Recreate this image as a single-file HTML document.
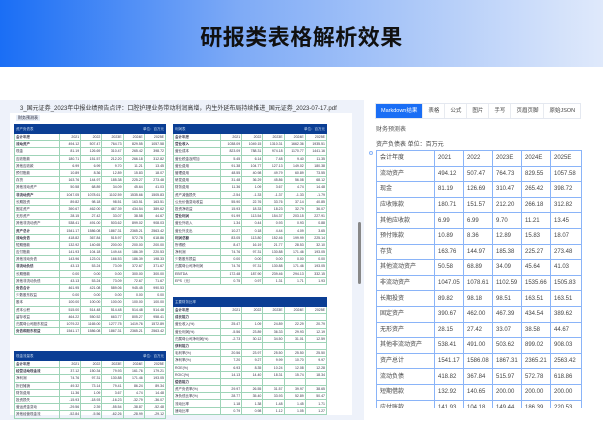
<!DOCTYPE html>
<html><head><meta charset="utf-8"><style>
*{margin:0;padding:0;box-sizing:border-box}
body{width:603px;height:437px;overflow:hidden;background:#fff;font-family:"Liberation Sans","Noto Sans CJK SC",sans-serif;position:relative}
.banner{position:absolute;left:0;top:0;width:603px;height:67px;background:linear-gradient(90deg,#1a6ef5 0%,#7fabf6 40%,#dfe9fb 100%)}
.banner h1{position:absolute;left:0;width:603px;top:20px;text-align:center;font-size:22px;font-weight:bold;color:#111;letter-spacing:0.5px}
.lp{position:absolute;left:0;top:100px;width:364px;height:320px;background:#eef2fa}
.fn{position:absolute;left:20px;top:103px;font-size:6px;color:#333;white-space:nowrap}
.doc{position:absolute;left:10px;top:113px;width:342px;height:302px;background:#fff;overflow:hidden}
.sb{position:absolute;left:358px;top:222px;width:3px;height:62px;background:#888;border-radius:2px}
.tag{position:absolute;left:16px;top:115px;font-size:4px;background:#e8eef8;padding:0 2px;color:#223}
table.l{position:absolute;border-collapse:collapse;font-size:3.5px;color:#334;table-layout:fixed}
table.l td{height:7.2px;border:0.6px solid #9fd4b8;padding:0 1px;text-align:right;white-space:nowrap;overflow:hidden;line-height:6px}
table.l td:first-child{text-align:left}
table.l tr.h td{background:#0b3e94;color:#cde;border-color:#0b3e94;height:9px}
table.l tr.b td:first-child{font-weight:bold}
.tabs{position:absolute;left:375px;top:103px;height:16px;display:flex;border:1px solid #e4e8f0;background:#fff;white-space:nowrap}
.tabs div{font-size:5.5px;color:#444;padding:0 5px;line-height:14px;border-right:1px solid #e8ebf0;white-space:nowrap;flex:none}
.tabs div.a{background:#1a6ef5;color:#fff}
.t1{position:absolute;left:376px;top:124px;font-size:6px;color:#555}
.t2{position:absolute;left:376px;top:139px;font-size:6px;color:#444}
.dot{position:absolute;left:369px;top:151px;width:4px;height:4px;border:1px solid #8ab4f8;border-radius:50%}
.rw{position:absolute;left:376px;top:150px;width:206px;height:258px;overflow:hidden}
table.r{border-collapse:collapse;font-size:6px;color:#444;table-layout:fixed;width:205px}
table.r td{border:1px solid #8ab4f8;height:15.6px;padding:0 3px;white-space:nowrap;overflow:hidden;line-height:8px}
</style></head><body>
<div class="banner"><h1>研报类表格解析效果</h1></div>
<div class="lp"></div>
<div class="fn">3_国元证券_2023年中报业绩预告点评：口腔护理业务带动利润高增，内生外延布局持续推进_国元证券_2023-07-17.pdf</div>
<div class="doc"></div>
<div class="tag">财务预测表</div>
<table class="l" style="left:14px;top:124px;width:152px">
<colgroup><col style="width:45px"><col><col><col><col><col></colgroup>
<tr class="h"><td>资产负债表</td><td></td><td></td><td></td><td colspan="2">单位：百万元</td></tr>
<tr class="b"><td>会计年度</td><td>2021</td><td>2022</td><td>2023E</td><td>2024E</td><td>2025E</td></tr>
<tr class="b"><td>流动资产</td><td>494.12</td><td>507.47</td><td>764.73</td><td>829.55</td><td>1057.58</td></tr>
<tr><td>现金</td><td>81.19</td><td>126.69</td><td>310.47</td><td>265.42</td><td>398.72</td></tr>
<tr><td>应收账款</td><td>180.71</td><td>151.57</td><td>212.20</td><td>266.18</td><td>312.82</td></tr>
<tr><td>其他应收款</td><td>6.99</td><td>6.99</td><td>9.70</td><td>11.21</td><td>13.45</td></tr>
<tr><td>预付账款</td><td>10.89</td><td>8.36</td><td>12.89</td><td>15.83</td><td>18.07</td></tr>
<tr><td>存货</td><td>163.76</td><td>144.97</td><td>185.38</td><td>225.27</td><td>273.48</td></tr>
<tr><td>其他流动资产</td><td>50.58</td><td>68.89</td><td>34.09</td><td>45.64</td><td>41.03</td></tr>
<tr class="b"><td>非流动资产</td><td>1047.05</td><td>1078.61</td><td>1102.59</td><td>1535.66</td><td>1505.83</td></tr>
<tr><td>长期投资</td><td>89.82</td><td>98.18</td><td>98.51</td><td>163.51</td><td>163.51</td></tr>
<tr><td>固定资产</td><td>390.67</td><td>462.00</td><td>467.39</td><td>434.54</td><td>389.62</td></tr>
<tr><td>无形资产</td><td>28.15</td><td>27.42</td><td>33.07</td><td>38.58</td><td>44.67</td></tr>
<tr><td>其他非流动资产</td><td>538.41</td><td>491.00</td><td>503.62</td><td>899.02</td><td>908.03</td></tr>
<tr class="b"><td>资产总计</td><td>1541.17</td><td>1586.08</td><td>1867.31</td><td>2365.21</td><td>2563.42</td></tr>
<tr class="b"><td>流动负债</td><td>418.82</td><td>367.84</td><td>515.97</td><td>572.78</td><td>618.86</td></tr>
<tr><td>短期借款</td><td>132.92</td><td>140.65</td><td>200.00</td><td>200.00</td><td>200.00</td></tr>
<tr><td>应付账款</td><td>141.93</td><td>104.18</td><td>149.44</td><td>186.39</td><td>220.53</td></tr>
<tr><td>其他流动负债</td><td>143.96</td><td>123.01</td><td>166.53</td><td>186.39</td><td>198.33</td></tr>
<tr class="b"><td>非流动负债</td><td>43.13</td><td>53.24</td><td>73.09</td><td>372.67</td><td>371.67</td></tr>
<tr><td>长期借款</td><td>0.00</td><td>0.00</td><td>0.00</td><td>300.00</td><td>300.00</td></tr>
<tr><td>其他非流动负债</td><td>43.13</td><td>53.24</td><td>73.09</td><td>72.67</td><td>71.67</td></tr>
<tr class="b"><td>负债合计</td><td>461.95</td><td>421.08</td><td>589.06</td><td>945.45</td><td>990.53</td></tr>
<tr><td>少数股东权益</td><td>0.00</td><td>0.00</td><td>0.00</td><td>0.00</td><td>0.00</td></tr>
<tr><td>股本</td><td>100.00</td><td>100.00</td><td>100.00</td><td>100.00</td><td>100.00</td></tr>
<tr><td>资本公积</td><td>515.00</td><td>514.48</td><td>514.48</td><td>514.48</td><td>514.48</td></tr>
<tr><td>留存收益</td><td>464.22</td><td>550.52</td><td>663.77</td><td>805.27</td><td>958.41</td></tr>
<tr><td>归属母公司股东权益</td><td>1079.22</td><td>1165.00</td><td>1277.75</td><td>1419.76</td><td>1572.89</td></tr>
<tr class="b"><td>负债和股东权益</td><td>1541.17</td><td>1586.08</td><td>1867.31</td><td>2365.21</td><td>2563.42</td></tr>
</table>
<table class="l" style="left:14px;top:351px;width:152px">
<colgroup><col style="width:45px"><col><col><col><col><col></colgroup>
<tr class="h"><td>现金流量表</td><td></td><td></td><td></td><td colspan="2">单位：百万元</td></tr>
<tr class="b"><td>会计年度</td><td>2021</td><td>2022</td><td>2023E</td><td>2024E</td><td>2025E</td></tr>
<tr class="b"><td>经营活动现金流</td><td>37.12</td><td>150.34</td><td>79.93</td><td>161.76</td><td>179.21</td></tr>
<tr><td>净利润</td><td>74.76</td><td>97.31</td><td>130.88</td><td>171.46</td><td>193.05</td></tr>
<tr><td>折旧摊销</td><td>49.32</td><td>73.14</td><td>79.41</td><td>86.24</td><td>89.34</td></tr>
<tr><td>财务费用</td><td>11.36</td><td>1.09</td><td>3.67</td><td>4.74</td><td>14.48</td></tr>
<tr><td>投资损失</td><td>-15.93</td><td>-18.93</td><td>-16.23</td><td>-32.79</td><td>-36.07</td></tr>
<tr><td>营运资金变动</td><td>-29.56</td><td>2.39</td><td>-55.54</td><td>-38.87</td><td>-52.48</td></tr>
<tr><td>其他经营现金流</td><td>-52.84</td><td>-5.56</td><td>-62.26</td><td>-28.99</td><td>-29.12</td></tr>
</table>
<table class="l" style="left:173px;top:124px;width:154px">
<colgroup><col style="width:47px"><col><col><col><col><col></colgroup>
<tr class="h"><td>利润表</td><td></td><td></td><td></td><td colspan="2">单位：百万元</td></tr>
<tr class="b"><td>会计年度</td><td>2021</td><td>2022</td><td>2023E</td><td>2024E</td><td>2025E</td></tr>
<tr class="b"><td>营业收入</td><td>1038.09</td><td>1049.15</td><td>1310.31</td><td>1662.36</td><td>1935.51</td></tr>
<tr><td>营业成本</td><td>823.09</td><td>788.31</td><td>974.18</td><td>1170.77</td><td>1441.16</td></tr>
<tr><td>营业税金及附加</td><td>5.45</td><td>6.14</td><td>7.48</td><td>9.40</td><td>11.35</td></tr>
<tr><td>营业费用</td><td>91.38</td><td>104.77</td><td>127.13</td><td>149.02</td><td>180.38</td></tr>
<tr><td>管理费用</td><td>48.55</td><td>40.98</td><td>49.79</td><td>60.89</td><td>73.55</td></tr>
<tr><td>研发费用</td><td>31.48</td><td>36.29</td><td>45.86</td><td>56.08</td><td>68.12</td></tr>
<tr><td>财务费用</td><td>11.36</td><td>1.09</td><td>3.67</td><td>4.74</td><td>14.48</td></tr>
<tr><td>资产减值损失</td><td>-2.54</td><td>-1.33</td><td>-1.37</td><td>-1.33</td><td>-1.79</td></tr>
<tr><td>公允价值变动收益</td><td>55.90</td><td>22.76</td><td>33.76</td><td>37.14</td><td>40.85</td></tr>
<tr><td>投资净收益</td><td>15.93</td><td>18.33</td><td>18.23</td><td>32.79</td><td>36.07</td></tr>
<tr class="b"><td>营业利润</td><td>91.99</td><td>113.54</td><td>154.37</td><td>203.15</td><td>227.91</td></tr>
<tr><td>营业外收入</td><td>1.34</td><td>0.44</td><td>0.93</td><td>0.93</td><td>0.88</td></tr>
<tr><td>营业外支出</td><td>10.27</td><td>0.18</td><td>4.44</td><td>4.09</td><td>3.65</td></tr>
<tr class="b"><td>利润总额</td><td>83.05</td><td>113.80</td><td>152.46</td><td>199.99</td><td>225.14</td></tr>
<tr><td>所得税</td><td>8.47</td><td>16.19</td><td>21.77</td><td>28.53</td><td>32.10</td></tr>
<tr><td>净利润</td><td>74.76</td><td>97.31</td><td>130.88</td><td>171.46</td><td>193.05</td></tr>
<tr><td>少数股东损益</td><td>0.00</td><td>0.00</td><td>0.00</td><td>0.00</td><td>0.00</td></tr>
<tr><td>归属母公司净利润</td><td>74.76</td><td>97.31</td><td>130.88</td><td>171.46</td><td>193.05</td></tr>
<tr><td>EBITDA</td><td>172.48</td><td>187.90</td><td>239.46</td><td>294.13</td><td>332.15</td></tr>
<tr><td>EPS（元）</td><td>0.75</td><td>0.97</td><td>1.31</td><td>1.71</td><td>1.93</td></tr>
</table>
<table class="l" style="left:173px;top:297px;width:154px">
<colgroup><col style="width:47px"><col><col><col><col><col></colgroup>
<tr class="h"><td>主要财务比率</td><td></td><td></td><td></td><td></td><td></td></tr>
<tr class="b"><td>会计年度</td><td>2021</td><td>2022</td><td>2023E</td><td>2024E</td><td>2025E</td></tr>
<tr class="b"><td>成长能力</td><td></td><td></td><td></td><td></td><td></td></tr>
<tr><td>营业收入(%)</td><td>25.47</td><td>1.09</td><td>24.89</td><td>22.29</td><td>20.79</td></tr>
<tr><td>营业利润(%)</td><td>-5.56</td><td>23.89</td><td>36.33</td><td>29.93</td><td>12.19</td></tr>
<tr><td>归属母公司净利润(%)</td><td>-2.73</td><td>30.12</td><td>34.50</td><td>31.01</td><td>12.59</td></tr>
<tr class="b"><td>获利能力</td><td></td><td></td><td></td><td></td><td></td></tr>
<tr><td>毛利率(%)</td><td>20.56</td><td>23.97</td><td>25.50</td><td>25.50</td><td>25.50</td></tr>
<tr><td>净利率(%)</td><td>7.20</td><td>9.27</td><td>9.99</td><td>10.70</td><td>9.97</td></tr>
<tr><td>ROE(%)</td><td>6.93</td><td>8.35</td><td>10.24</td><td>12.08</td><td>12.28</td></tr>
<tr><td>ROIC(%)</td><td>14.13</td><td>14.40</td><td>18.31</td><td>15.74</td><td>18.34</td></tr>
<tr class="b"><td>偿债能力</td><td></td><td></td><td></td><td></td><td></td></tr>
<tr><td>资产负债率(%)</td><td>29.97</td><td>26.55</td><td>31.57</td><td>39.97</td><td>38.65</td></tr>
<tr><td>净负债比率(%)</td><td>28.77</td><td>35.40</td><td>33.93</td><td>52.89</td><td>50.47</td></tr>
<tr><td>流动比率</td><td>1.18</td><td>1.38</td><td>1.48</td><td>1.45</td><td>1.71</td></tr>
<tr><td>速动比率</td><td>0.79</td><td>0.98</td><td>1.12</td><td>1.05</td><td>1.27</td></tr>
</table>
<div class="sb"></div>
<div class="tabs"><div class="a">Markdown结果</div><div>表格</div><div>公式</div><div>图片</div><div>手写</div><div>页眉页脚</div><div style="border:none">原始JSON</div></div>
<div class="t1">财务预测表</div>
<div class="t2">资产负债表 单位：百万元</div>
<div class="dot"></div>
<div class="rw"><table class="r">
<colgroup><col style="width:58px"><col style="width:29px"><col style="width:29px"><col style="width:29px"><col style="width:29px"><col style="width:31px"></colgroup>
<tr><td>会计年度</td><td>2021</td><td>2022</td><td>2023E</td><td>2024E</td><td>2025E</td></tr>
<tr><td>流动资产</td><td>494.12</td><td>507.47</td><td>764.73</td><td>829.55</td><td>1057.58</td></tr>
<tr><td>现金</td><td>81.19</td><td>126.69</td><td>310.47</td><td>265.42</td><td>398.72</td></tr>
<tr><td>应收账款</td><td>180.71</td><td>151.57</td><td>212.20</td><td>266.18</td><td>312.82</td></tr>
<tr><td>其他应收款</td><td>6.99</td><td>6.99</td><td>9.70</td><td>11.21</td><td>13.45</td></tr>
<tr><td>预付账款</td><td>10.89</td><td>8.36</td><td>12.89</td><td>15.83</td><td>18.07</td></tr>
<tr><td>存货</td><td>163.76</td><td>144.97</td><td>185.38</td><td>225.27</td><td>273.48</td></tr>
<tr><td>其他流动资产</td><td>50.58</td><td>68.89</td><td>34.09</td><td>45.64</td><td>41.03</td></tr>
<tr><td>非流动资产</td><td>1047.05</td><td>1078.61</td><td>1102.59</td><td>1535.66</td><td>1505.83</td></tr>
<tr><td>长期投资</td><td>89.82</td><td>98.18</td><td>98.51</td><td>163.51</td><td>163.51</td></tr>
<tr><td>固定资产</td><td>390.67</td><td>462.00</td><td>467.39</td><td>434.54</td><td>389.62</td></tr>
<tr><td>无形资产</td><td>28.15</td><td>27.42</td><td>33.07</td><td>38.58</td><td>44.67</td></tr>
<tr><td>其他非流动资产</td><td>538.41</td><td>491.00</td><td>503.62</td><td>899.02</td><td>908.03</td></tr>
<tr><td>资产总计</td><td>1541.17</td><td>1586.08</td><td>1867.31</td><td>2365.21</td><td>2563.42</td></tr>
<tr><td>流动负债</td><td>418.82</td><td>367.84</td><td>515.97</td><td>572.78</td><td>618.86</td></tr>
<tr><td>短期借款</td><td>132.92</td><td>140.65</td><td>200.00</td><td>200.00</td><td>200.00</td></tr>
<tr><td>应付账款</td><td>141.93</td><td>104.18</td><td>149.44</td><td>186.39</td><td>220.53</td></tr>
</table></div>
</body></html>
